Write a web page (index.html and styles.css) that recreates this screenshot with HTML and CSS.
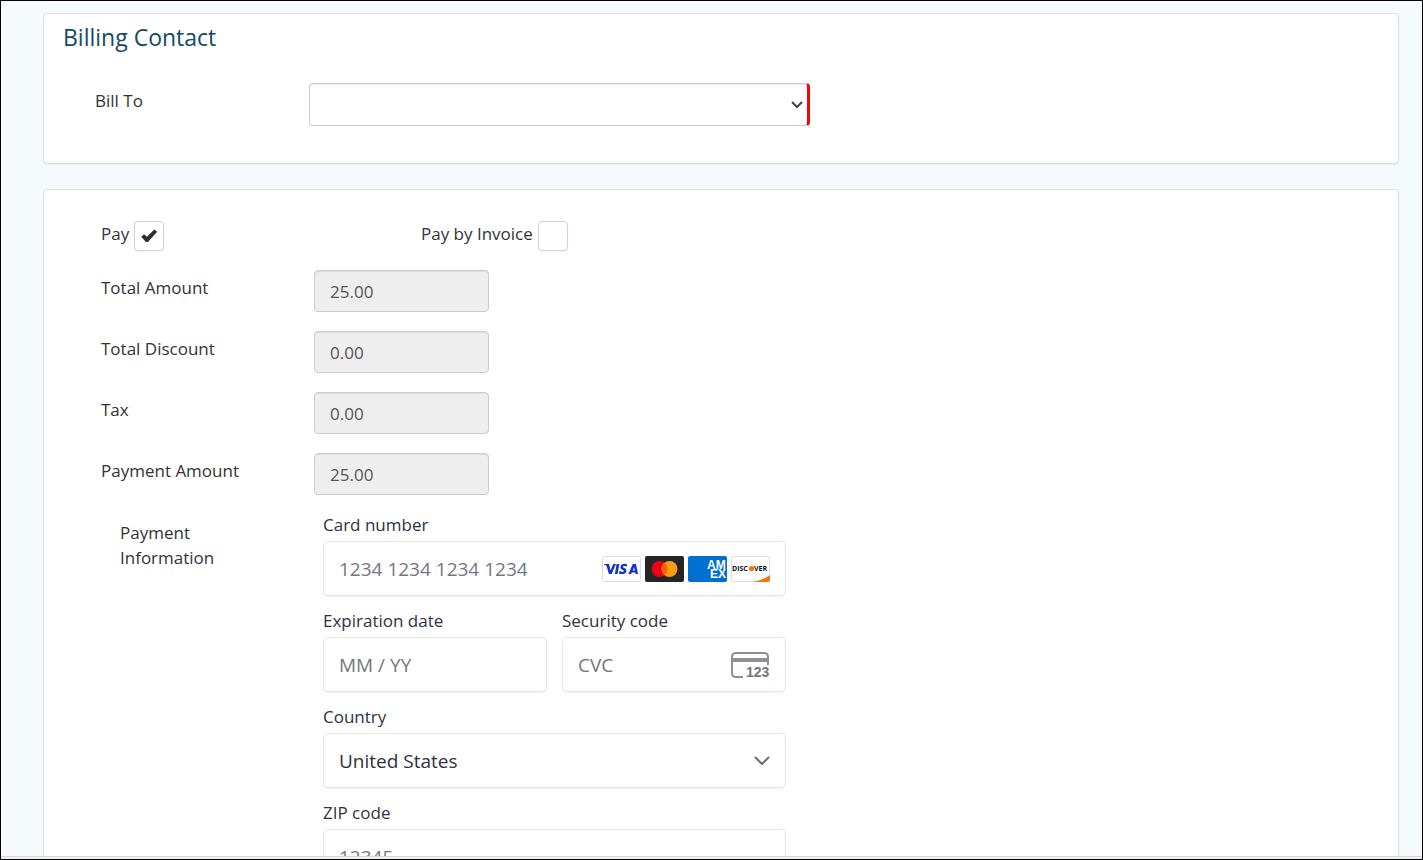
FILE: index.html
```html
<!DOCTYPE html>
<html lang="en">
<head>
    <meta charset="UTF-8">
    <meta name="viewport" content="width=device-width, initial-scale=1.0">
    <title>Billing Contact</title>
    <link rel="stylesheet" href="styles.css">
</head>
<body>
    <div class="window">
        <form class="page">
            <section class="panel contact">
                <h2>Billing Contact</h2>
                <div class="bill-row">
                    <label for="billTo">Bill To</label>
                    <div class="select-box required">
                        <select id="billTo" required>
                            <option value=""></option>
                        </select>
                        <svg width="12" height="8" viewBox="0 0 12 8"><path d="M1 1l5 5 5-5" fill="none" stroke="#444" stroke-width="2"/></svg>
                    </div>
                </div>
            </section>

            <section class="panel payment">
                <div class="check-row">
                    <div class="check">
                        <label for="pay">Pay</label>
                        <input type="checkbox" id="pay" checked>
                    </div>
                    <div class="check">
                        <label for="payInvoice">Pay by Invoice</label>
                        <input type="checkbox" id="payInvoice">
                    </div>
                </div>

                <div class="amount-row">
                    <label for="totalAmount">Total Amount</label>
                    <input type="text" id="totalAmount" value="25.00" readonly>
                </div>
                <div class="amount-row">
                    <label for="totalDiscount">Total Discount</label>
                    <input type="text" id="totalDiscount" value="0.00" readonly>
                </div>
                <div class="amount-row">
                    <label for="tax">Tax</label>
                    <input type="text" id="tax" value="0.00" readonly>
                </div>
                <div class="amount-row">
                    <label for="paymentAmount">Payment Amount</label>
                    <input type="text" id="paymentAmount" value="25.00" readonly>
                </div>

                <div class="info-row">
                    <div class="info-label">Payment Information</div>
                    <div class="card-form">
                        <div class="field wide">
                            <label for="cardNumber">Card number</label>
                            <div class="field-box">
                                <input type="text" id="cardNumber" placeholder="1234 1234 1234 1234">
                                <div class="brands">
                                    <!-- Visa -->
                                    <svg width="39" height="26" viewBox="0 0 39 26">
                                        <rect x=".5" y=".5" width="38" height="25" rx="2" fill="#fff" stroke="#ddd"/>
                                        <path d="M2 8h5l1.600 6.600L11.200 8H14L9.700 18H6.900L4.600 10Q3.600 9 2 8.600zM14.600 8h2.700l-1.700 10h-2.700zM25.300 8.400l-.5 2.200q-1.600-.8-2.900-.6c-1.500.3-1.200 1.100 0 1.700 2 1 2.800 2 2.400 3.700-.6 3-4.800 3.200-7.400 2l.5-2.300q1.800.9 3.200.8c1.700-.2 1.600-1.300.2-1.900-2-.9-2.700-2-2.200-3.700.8-2.600 4.100-2.900 6.700-1.900zM31.500 8H34l2 10h-2.500l-.3-1.500h-3.400l-.7 1.500h-2.700l4-9.200Q30.700 8 31.500 8zm.7 3.200-1.500 3.400h2.100z" fill="#1434cb"/>
                                    </svg>
                                    <!-- Mastercard -->
                                    <svg width="39" height="26" viewBox="0 0 39 26">
                                        <rect width="39" height="26" rx="2" fill="#252525"/>
                                        <circle cx="14.500" cy="13" r="8" fill="#eb001b"/>
                                        <circle cx="24.500" cy="13" r="8" fill="#f79e1b"/>
                                        <path d="M19.500 6.750a8 8 0 0 1 0 12.500 8 8 0 0 1 0-12.500z" fill="#ff5f00"/>
                                    </svg>
                                    <!-- American Express -->
                                    <svg class="amex" width="39" height="26" viewBox="0 0 39 26">
                                        <rect width="39" height="26" rx="2" fill="#016fd0"/>
                                        <text><tspan x="19" y="13">AM</tspan><tspan x="22" y="22">EX</tspan></text>
                                    </svg>
                                    <!-- Discover -->
                                    <svg class="discover" width="39" height="26" viewBox="0 0 39 26">
                                        <rect x=".5" y=".5" width="38" height="25" rx="2" fill="#fff" stroke="#ddd"/>
                                        <path d="M21 26Q32 24 39 19v5q0 2-2 2z" fill="#f27712"/>
                                        <text x="1" y="15">DISC</text>
                                        <circle cx="20.500" cy="12.500" r="2.600" fill="#f27712"/>
                                        <text x="23" y="15">VER</text>
                                    </svg>
                                </div>
                            </div>
                        </div>
                        <div class="field">
                            <label for="expiry">Expiration date</label>
                            <div class="field-box">
                                <input type="text" id="expiry" placeholder="MM / YY">
                            </div>
                        </div>
                        <div class="field">
                            <label for="cvc">Security code</label>
                            <div class="field-box">
                                <input type="text" id="cvc" placeholder="CVC">
                                <svg class="cvc-icon" width="40" height="32" viewBox="0 -2 40 32">
                                    <path d="M13 26H6q-4 0-4-4V6q0-4 4-4h28q4 0 4 4v8" fill="none" stroke="#8f8f98" stroke-width="2"/>
                                    <path d="M2 9h36" stroke="#8f8f98" stroke-width="4"/>
                                    <text x="16" y="26">123</text>
                                </svg>
                            </div>
                        </div>
                        <div class="field wide">
                            <label for="country">Country</label>
                            <div class="field-box">
                                <select id="country">
                                    <option>United States</option>
                                </select>
                                <svg class="chevron" width="16" height="10" viewBox="0 0 16 10"><path d="M1.500 1.500L8 8l6.500-6.500" fill="none" stroke="#6d6e78" stroke-width="2" stroke-linecap="round" stroke-linejoin="round"/></svg>
                            </div>
                        </div>
                        <div class="field wide">
                            <label for="zip">ZIP code</label>
                            <div class="field-box">
                                <input type="text" id="zip" placeholder="12345">
                            </div>
                        </div>
                    </div>
                </div>
            </section>
        </form>
        <div class="bottom-bar"></div>
    </div>
</body>
</html>
```
FILE: styles.css
```css
* {
    box-sizing: border-box;
}
body {
    margin: 0;
    font-family: "Open Sans", sans-serif;
    font-size: 17px;
    line-height: 25px;
    color: #333;
}
.window {
    display: flex;
    flex-direction: column;
    height: 100vh;
    border: 1px solid #000;
    background-color: #f5fafd;
    overflow: hidden;
}
.page {
    flex: 1;
    min-height: 0;
    padding: 12px 23px 0 42px;
    overflow: hidden;
}
.bottom-bar {
    height: 3px;
    border-top: 1px solid #d8d8d8;
    background-color: #f0f0f0;
}
.panel {
    background-color: #fff;
    border: 1px solid #ddd;
    border-radius: 4px;
    box-shadow: 0 1px 1px rgba(0, 0, 0, 0.05);
}
.contact {
    margin-bottom: 25px;
    padding: 8px 19px 37px;
}
h2 {
    margin: 0 0 31px;
    font-size: 23px;
    font-weight: 400;
    line-height: 30px;
    color: #144a66;
}
input, select {
    font-family: inherit;
    font-size: inherit;
    color: inherit;
}
.bill-row {
    display: flex;
    padding-left: 32px;
}
.bill-row label {
    width: 214px;
    padding-top: 5px;
}
.select-box {
    display: grid;
    grid-template-columns: 1fr 16px;
    align-items: center;
    width: 501px;
    height: 43px;
    border: 1px solid #ccc;
    border-radius: 4px;
    box-shadow: inset 0 1px 1px rgba(0, 0, 0, 0.075);
}
.required {
    border-right: 3px solid #f00;
}
.select-box select, .field-box select {
    grid-area: 1 / 1 / 2 / 3;
    width: 100%;
    height: 100%;
    border: 0;
    background: none;
    appearance: none;
    outline: none;
}
.select-box svg {
    grid-area: 1 / 2;
    pointer-events: none;
}
.payment {
    padding: 31px 57px 40px;
}
.check-row {
    display: flex;
    margin-bottom: 19px;
}
.check {
    display: flex;
    gap: 5px;
    width: 320px;
}
.check input {
    display: grid;
    place-items: center;
    width: 30px;
    height: 30px;
    margin: 0;
    border: 1px solid #c8d4de;
    border-radius: 4px;
    background-color: #fff;
    box-shadow: 0 1px 2px rgba(0, 0, 0, 0.05);
    appearance: none;
}
.check input:checked::before {
    content: "";
    width: 16px;
    height: 14px;
    background-color: #2d2d38;
    clip-path: polygon(0 55%, 18% 38%, 36% 55%, 82% 4%, 100% 20%, 42% 92%, 30% 92%);
}
.amount-row {
    display: flex;
    margin-bottom: 19px;
}
.amount-row label {
    width: 213px;
    padding-top: 5px;
}
.amount-row input {
    width: 175px;
    height: 42px;
    padding: 0 15px;
    border: 1px solid #ccc;
    border-radius: 4px;
    background-color: #eee;
    box-shadow: inset 0 1px 1px rgba(0, 0, 0, 0.075);
    color: #555;
}
.info-row {
    display: flex;
    padding-left: 19px;
}
.info-label {
    width: 120px;
    margin-right: 83px;
    padding-top: 6px;
}
.card-form {
    display: grid;
    grid-template-columns: 1fr 1fr;
    gap: 14px 15px;
    width: 463px;
    color: #30313d;
}
.wide {
    grid-column: span 2;
}
.field label {
    display: block;
    margin-bottom: 5px;
    line-height: 22px;
}
.field-box {
    display: grid;
    grid-template-columns: 1fr auto;
    align-items: center;
    height: 55px;
    padding-right: 15px;
    border: 1px solid #e6e6e6;
    border-radius: 5px;
    background-color: #fff;
    box-shadow: 0 1px 1px rgba(0, 0, 0, 0.03), 0 3px 6px rgba(0, 0, 0, 0.02);
    font-size: 19px;
}
.field-box input {
    width: 100%;
    min-width: 0;
    height: 100%;
    padding: 0 0 0 15px;
    border: 0;
    background: none;
    outline: none;
}
.field-box select {
    padding: 0 0 0 15px;
}
.field-box input::placeholder {
    color: #757680;
}
.brands {
    display: flex;
    gap: 4px;
}
.amex text {
    font: bold 12px "Liberation Sans", sans-serif;
    fill: #fff;
}
.discover text {
    font: bold 7px "Open Sans", sans-serif;
    fill: #111;
}
.cvc-icon text {
    font: bold 14px "Liberation Sans", sans-serif;
    fill: #75757f;
}
.chevron {
    grid-area: 1 / 2;
    pointer-events: none;
}
```
